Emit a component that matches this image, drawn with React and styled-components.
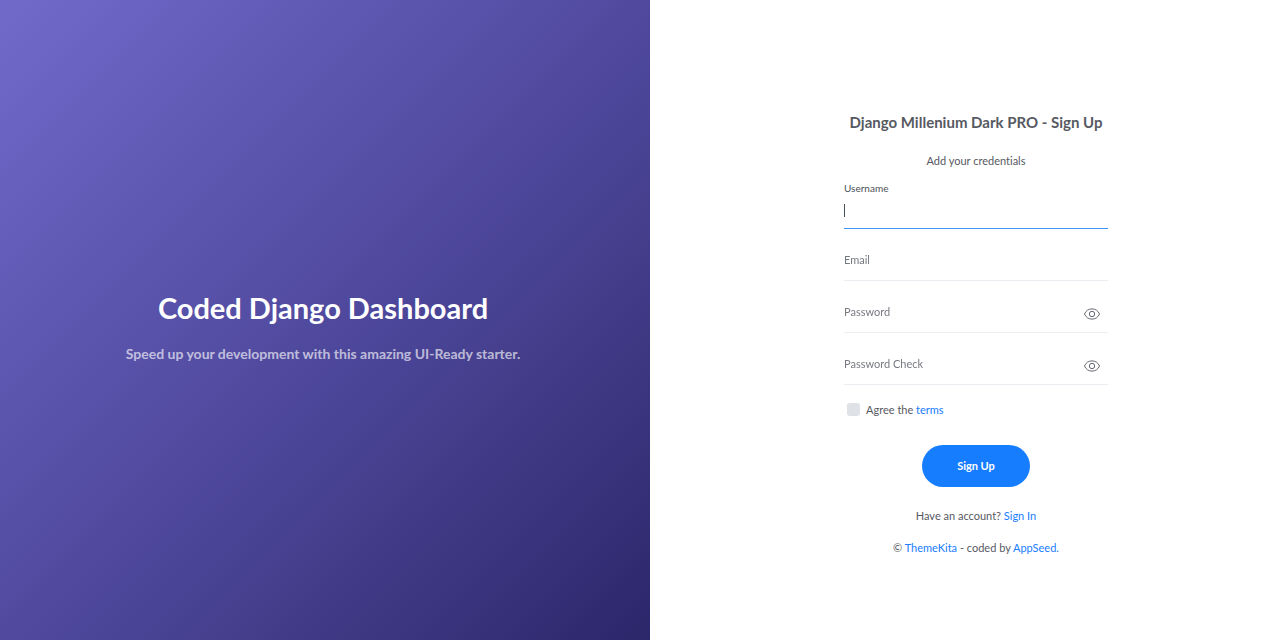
import React, { useState } from "react";
import styled, { createGlobalStyle } from "styled-components";

const GlobalStyle = createGlobalStyle`
  *, *::before, *::after { box-sizing: border-box; }
  body {
    margin: 0;
    background: #fff;
    color: #575962;
    font-family: Lato, "Liberation Sans", sans-serif;
    font-size: 11px;
    line-height: 20px;
    font-variant-ligatures: none;
  }
`;

const Page = styled.div`
  display: grid;
  grid-template-columns: 65fr 63fr;
  min-height: 100vh;
`;

const Aside = styled.aside`
  display: flex;
  flex-direction: column;
  align-items: center;
  justify-content: center;
  padding: 12px 20px 0 16px;
  text-align: center;
  background: linear-gradient(135deg, #716aca 0%, #4a4497 59%, #443e8b 68%, #2b276b 100%);
`;

const AsideTitle = styled.h1`
  margin: 0 0 16px;
  color: #fff;
  font-size: 29px;
  line-height: 40px;
  font-weight: 700;
`;

const AsideText = styled.p`
  margin: 0;
  color: rgba(255, 255, 255, 0.65);
  font-size: 14px;
  line-height: 20px;
  font-weight: 700;
`;

const Main = styled.main`
  display: flex;
  align-items: center;
  justify-content: center;
  padding: 29px 0 0 22px;
`;

const Form = styled.form`
  display: flex;
  flex-direction: column;
  width: 264px;
`;

const Title = styled.h2`
  margin: 0 0 19px;
  font-size: 15px;
  line-height: 20px;
  font-weight: 700;
  text-align: center;
`;

const Note = styled.p`
  margin: 0 0 ${(p) => p.$gap || 0}px;
  text-align: center;
`;

const Field = styled.div`
  position: relative;
  display: flex;
  align-items: center;
  height: 52px;
  border-bottom: 1px solid #ebedf2;

  &:focus-within { border-color: #3f96f7; }
`;

const FieldLabel = styled.label`
  position: absolute;
  left: 0;
  top: 21px;
  color: #787a82;
  pointer-events: none;

  ${Field}:focus-within &, input:not(:placeholder-shown) ~ & {
    top: 1px;
    color: #495057;
    font-size: 10px;
  }
`;

const FieldInput = styled.input`
  flex: 1;
  min-width: 0;
  height: 36px;
  margin-top: 16px;
  padding: 0;
  border: 0;
  outline: 0;
  background: transparent;
  color: #495057;
  font: inherit;

  &:focus:placeholder-shown { caret-color: transparent; }
`;

const Caret = styled.span`
  position: absolute;
  left: 0;
  top: 27px;
  display: none;
  width: 1px;
  height: 13px;
  background: #495057;

  input:focus:placeholder-shown ~ & { display: block; }
`;

const EyeButton = styled.button`
  display: flex;
  margin: 16px 8px 0 0;
  padding: 0;
  border: 0;
  background: transparent;
  color: #64666e;
  cursor: pointer;
`;

const Agree = styled.div`
  display: flex;
  align-items: center;
  gap: 6px;
  margin: 15px 0 25px 3px;
`;

const Checkbox = styled.input`
  appearance: none;
  width: 13px;
  height: 13px;
  margin: 0;
  border-radius: 3px;
  background: #dee2e6;

  &:checked { background: #177dff; }
`;

const Link = styled.a`
  color: #177dff;
  text-decoration: none;
`;

const Submit = styled.button`
  align-self: center;
  width: 108px;
  height: 42px;
  margin-bottom: 19px;
  border: 0;
  border-radius: 21px;
  background: #177dff;
  color: #fff;
  font: inherit;
  font-weight: 700;
  cursor: pointer;
`;

const EyeIcon = () => (
  <svg width="16" height="16" viewBox="0 0 16 16" fill="none" stroke="currentColor" aria-hidden="true">
    <path d="M.5 8C2 4.500 4.700 2.900 8 2.900S14 4.500 15.500 8C14 11.500 11.300 13.100 8 13.100S2 11.500 .5 8Z" />
    <circle cx="8" cy="8" r="2.700" />
  </svg>
);

function TextField({ id, label, type = "text", autoFocus }) {
  const [shown, setShown] = useState(false);
  const secret = type === "password";
  return (
    <Field>
      <FieldInput
        id={id}
        name={id}
        type={secret && shown ? "text" : type}
        placeholder=" "
        autoFocus={autoFocus}
      />
      <FieldLabel htmlFor={id}>{label}</FieldLabel>
      <Caret />
      {secret && (
        <EyeButton type="button" aria-label={"Show " + label} onClick={() => setShown(!shown)}>
          <EyeIcon />
        </EyeButton>
      )}
    </Field>
  );
}

export default function App() {
  return (
    <>
      <GlobalStyle />
      <Page>
        <Aside>
          <AsideTitle>Coded Django Dashboard</AsideTitle>
          <AsideText>Speed up your development with this amazing UI-Ready starter.</AsideText>
        </Aside>
        <Main>
          <Form onSubmit={(e) => e.preventDefault()}>
            <Title>Django Millenium Dark PRO - Sign Up</Title>
            <Note $gap={6}>Add your credentials</Note>
            <TextField id="username" label="Username" autoFocus />
            <TextField id="email" label="Email" type="email" />
            <TextField id="password" label="Password" type="password" />
            <TextField id="password-check" label="Password Check" type="password" />
            <Agree>
              <Checkbox type="checkbox" id="agree" />
              <label htmlFor="agree">
                Agree the <Link href="#terms">terms</Link>
              </label>
            </Agree>
            <Submit type="submit">Sign Up</Submit>
            <Note $gap={12}>
              Have an account? <Link href="#sign-in">Sign In</Link>
            </Note>
            <Note>
              © <Link href="#themekita">ThemeKita</Link> - coded by <Link href="#appseed">AppSeed.</Link>
            </Note>
          </Form>
        </Main>
      </Page>
    </>
  );
}
